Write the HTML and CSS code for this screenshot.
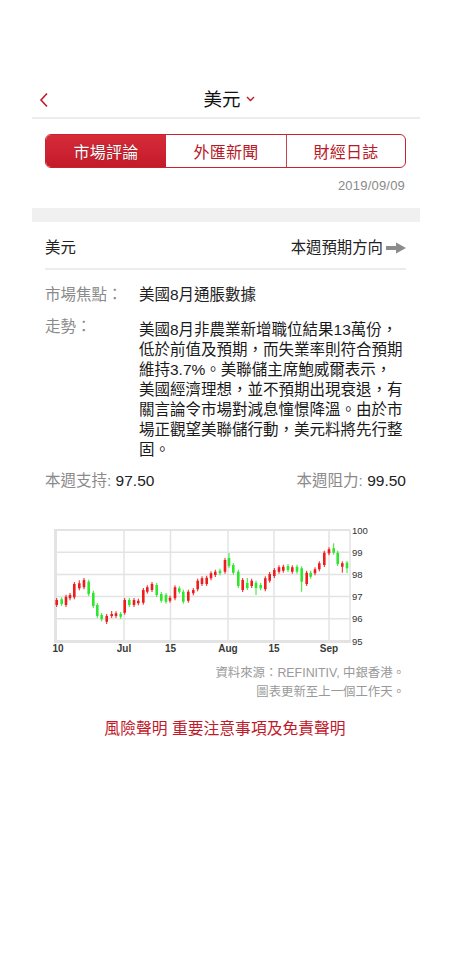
FILE: index.html
```html
<!DOCTYPE html>
<html lang="zh-Hant">
<head>
<meta charset="utf-8">
<title>美元</title>
<link rel="stylesheet" href="styles.css">
</head>
<body>
<div class="page">
  <header class="header">
    <span class="back">
      <svg width="10" height="16" viewBox="0 0 10 16"><polyline points="8,1.5 2,8 8,14.5" fill="none" stroke="#c0192a" stroke-width="1.6"/></svg>
    </span>
    <div class="title">美元<svg class="caret" width="9" height="6" viewBox="0 0 9 6"><polyline points="1,1 4.5,4.5 8,1" fill="none" stroke="#c0192a" stroke-width="1.4"/></svg></div>
    <span></span>
  </header>

  <nav class="tabs">
    <div class="tab active">市場評論</div>
    <div class="tab">外匯新聞</div>
    <div class="tab">財經日誌</div>
  </nav>

  <div class="date-wrap"><span class="date">2019/09/09</span></div>

  <div class="grey-bar"></div>

  <section class="content">
    <div class="currency-row">
      <span class="currency">美元</span>
      <span class="direction">本週預期方向<svg class="arrow" width="20" height="12" viewBox="0 0 20 12"><rect x="0" y="4" width="12" height="4" fill="#8c8c8c"/><polygon points="10,0.5 20,6 10,11.5" fill="#8c8c8c"/></svg></span>
    </div>

    <div class="info-row focus">
      <span class="label">市場焦點：</span>
      <span class="value">美國8月通脹數據</span>
    </div>

    <div class="info-row trend">
      <span class="label">走勢：</span>
      <p class="value para">美國8月非農業新增職位結果13萬份，低於前值及預期，而失業率則符合預期維持3.7%。美聯儲主席鮑威爾表示，美國經濟理想，並不預期出現衰退，有關言論令市場對減息憧憬降溫。由於市場正觀望美聯儲行動，美元料將先行整固。</p>
    </div>

    <div class="levels">
      <span><span class="label">本週支持:</span> 97.50</span>
      <span><span class="label">本週阻力:</span> 99.50</span>
    </div>
  </section>

  <svg class="chart" width="388" height="140" viewBox="32 520 388 140">
    <g stroke="#e3e3e3" fill="none">
      <path d="M55 530H350" stroke-width="2"/>
      <path d="M55 552.2H350M55 574.4H350M55 596.6H350M55 618.8H350" stroke-width="1.5"/>
      <path d="M124 530V641M170.5 530V641M228 530V641M274 530V641M329 530V641M350 530V641" stroke-width="1.5"/>
      <path d="M55.5 529V642.5M54 641.5H351" stroke-width="3"/>
    </g>
    <g stroke="#ee1c1c" stroke-width="1" fill="none">
      <path d="M56.7 598V607M66 594.7V607M70 593V600.3M74.3 582V599.3M79.3 580.3V590.3M84 578V589.3M106.7 614V624M111.7 611V618M116 611.3V618M124.7 598V614.7M134 598V607M138.3 598.7V605.3M143.3 588V604.7M147.3 585.3V593.7M152 582V592M170 595.7V602.7M175 585.3V600.3M188.3 589.7V602.7M193.3 588V595.3M197.7 578.7V591.3M202 576.3V586M206.7 575.7V586M211 571.3V580.3M215.3 569.7V577M225 558V573.7M242.7 578V592M251.7 578.7V588M265.3 576.3V591.3M269.7 572V582.7M274.3 568V578M279 565.3V573.7M283.3 564.7V572.7M292.3 565.3V573.7M306.7 570.7V586M315 567.3V575.3M319.3 561.3V571.3M324.3 550.7V567M329 547.3V555.3M342.3 561.3V572.7"/>
    </g>
    <path fill="#ee1c1c" d="M55.4 600h2.6V605h-2.6zM64.7 596.7h2.6V605h-2.6zM68.7 595h2.6V598.3h-2.6zM73 584h2.6V597.3h-2.6zM78 583.3h2.6V588.3h-2.6zM82.7 580h2.6V587.3h-2.6zM105.4 616h2.6V621.7h-2.6zM110.4 614h2.6V616h-2.6zM114.7 613.3h2.6V616h-2.6zM123.4 600h2.6V612.7h-2.6zM132.7 600h2.6V605h-2.6zM137 600.7h2.6V603.3h-2.6zM142 590h2.6V602.7h-2.6zM146 587.3h2.6V591.7h-2.6zM150.7 584h2.6V590h-2.6zM168.7 597.7h2.6V600.7h-2.6zM173.7 587.3h2.6V598.3h-2.6zM187 591.7h2.6V600.7h-2.6zM192 590h2.6V593.3h-2.6zM196.4 580.7h2.6V589.3h-2.6zM200.7 578.3h2.6V584h-2.6zM205.4 577.7h2.6V584h-2.6zM209.7 573.3h2.6V578.3h-2.6zM214 571.7h2.6V575h-2.6zM223.7 560h2.6V571.7h-2.6zM241.4 580h2.6V590h-2.6zM250.4 580.7h2.6V586h-2.6zM264 578.3h2.6V589.3h-2.6zM268.4 574h2.6V580.7h-2.6zM273 570h2.6V576h-2.6zM277.7 567.3h2.6V571.7h-2.6zM282 566.7h2.6V570.7h-2.6zM291 567.3h2.6V571.7h-2.6zM305.4 572.7h2.6V584h-2.6zM313.7 569.3h2.6V573.3h-2.6zM318 563.3h2.6V569.3h-2.6zM323 552.7h2.6V565h-2.6zM327.7 549.3h2.6V553.3h-2.6zM341 563.3h2.6V566.7h-2.6z"/>
    <g stroke="#2fe62f" stroke-width="1" fill="none">
      <path d="M61.7 597.3V606M88.7 579.7V596M93.3 590.7V608M97.3 603V618M101.7 613V621.3M120.7 612V618.7M129.3 598V607M156.7 583V597M161.3 592V602.7M166 593V603.7M179.3 586.3V593.7M183.3 589.7V603.7M220 568.7V575.3M229 553V568M233.3 563V574.7M238.3 569.7V588M247.3 578V590M256 580.7V595M260.7 583V590.3M288 564V572M297 564.7V573.7M301.7 566.3V591.7M310.7 570.7V578.7M333.7 543.3V554.7M337.7 550.7V566M347 561V573"/>
    </g>
    <path fill="#2fe62f" d="M60.4 599.3h2.6V604h-2.6zM87.4 581.7h2.6V594h-2.6zM92 592.7h2.6V606h-2.6zM96 605h2.6V616h-2.6zM100.4 615h2.6V619.3h-2.6zM119.4 614h2.6V616.7h-2.6zM128 600h2.6V605h-2.6zM155.4 585h2.6V595h-2.6zM160 594h2.6V600.7h-2.6zM164.7 595h2.6V601.7h-2.6zM178 588.3h2.6V591.7h-2.6zM182 591.7h2.6V601.7h-2.6zM218.7 570.7h2.6V573.3h-2.6zM227.7 558h2.6V566h-2.6zM232 565h2.6V572.7h-2.6zM237 571.7h2.6V586h-2.6zM246 583h2.6V588h-2.6zM254.7 582.7h2.6V588h-2.6zM259.4 585h2.6V588.3h-2.6zM286.7 566h2.6V570h-2.6zM295.7 566.7h2.6V571.7h-2.6zM300.4 568.3h2.6V581.7h-2.6zM309.4 572.7h2.6V576.7h-2.6zM332.4 548.3h2.6V552.7h-2.6zM336.4 552.7h2.6V564h-2.6zM345.7 562.7h2.6V568.3h-2.6z"/>
    <g class="ylab">
      <text x="352" y="533.5">100</text>
      <text x="352" y="555.7">99</text>
      <text x="352" y="577.9">98</text>
      <text x="352" y="600.1">97</text>
      <text x="352" y="622.3">96</text>
      <text x="352" y="644.5">95</text>
    </g>
    <g class="xlab">
      <text x="52.5" y="652">10</text>
      <text x="124" y="652" text-anchor="middle">Jul</text>
      <text x="170.5" y="652" text-anchor="middle">15</text>
      <text x="228" y="652" text-anchor="middle">Aug</text>
      <text x="274" y="652" text-anchor="middle">15</text>
      <text x="329" y="652" text-anchor="middle">Sep</text>
    </g>
  </svg>

  <div class="source">
    <div>資料來源：REFINITIV, 中銀香港。</div>
    <div>圖表更新至上一個工作天。</div>
  </div>

  <div class="disclaimer">風險聲明 重要注意事項及免責聲明</div>
</div>
</body>
</html>
```

FILE: styles.css
```css
* { box-sizing: border-box; }
html, body {
  margin: 0;
  padding: 0;
  background: #ffffff;
}
body {
  font-family: "Liberation Sans", "Noto Sans CJK TC", sans-serif;
  color: #222222;
  width: 450px;
}
.page {
  padding-top: 82px;
  padding-bottom: 40px;
}
.header {
  margin: 0 30px 0 32px;
  height: 37px;
  border-bottom: 2px solid #ececec;
  display: grid;
  grid-template-columns: 40px 1fr 40px;
  align-items: center;
}
.back {
  display: flex;
  align-items: center;
  padding-left: 7px;
  padding-top: 1px;
}
.title {
  display: flex;
  align-items: center;
  justify-content: center;
  font-size: 18.5px;
  line-height: 24px;
  color: #111111;
  padding-left: 6px;
}
.caret {
  margin-left: 5px;
  margin-top: -2px;
}
.tabs {
  margin: 15px 44px 0 45px;
  height: 34px;
  display: grid;
  grid-template-columns: 120px 120px 1fr;
  border: 1.5px solid #c8232f;
  border-radius: 6px;
  overflow: hidden;
}
.tab {
  display: flex;
  align-items: center;
  justify-content: center;
  font-size: 16px;
  color: #b81a28;
  letter-spacing: 0.3px;
}
.tab + .tab + .tab {
  border-left: 1px solid #c84550;
}
.tab.active {
  background: linear-gradient(180deg, #d62b39 0%, #c41b2b 100%);
  color: #ffffff;
  text-shadow: 0 0 1px #7a0a14;
}
.date-wrap {
  margin: 11px 45px 0 0;
  display: flex;
  justify-content: flex-end;
}
.date {
  font-size: 13px;
  line-height: 14px;
  color: #8a8a8a;
  letter-spacing: 0.2px;
}
.grey-bar {
  margin: 15px 30px 0 32px;
  height: 14px;
  background: #f0f0f0;
}
.content {
  padding: 0 44px 0 45px;
}
.currency-row {
  display: flex;
  justify-content: space-between;
  align-items: center;
  padding: 16px 0 10px;
  border-bottom: 2px solid #ececec;
  font-size: 15.4px;
  line-height: 20px;
}
.direction {
  display: flex;
  align-items: center;
}
.arrow {
  margin-left: 3px;
}
.info-row {
  display: grid;
  grid-template-columns: 94px 1fr;
  font-size: 15.5px;
  line-height: 20px;
}
.focus {
  margin-top: 15px;
}
.trend {
  margin-top: 15px;
}
.label {
  color: #8a8a8a;
}
.trend .label {
  margin-top: -3px;
}
.para {
  margin: 0;
  line-height: 20px;
  color: #1a1a1a;
}
.levels {
  margin-top: 11px;
  display: flex;
  justify-content: space-between;
  font-size: 15.5px;
  line-height: 20px;
}
.chart {
  display: block;
  margin: 29px 0 0 32px;
}
.ylab text {
  font-family: "Liberation Sans", sans-serif;
  font-size: 9.5px;
  fill: #333333;
}
.xlab text {
  font-family: "Liberation Sans", sans-serif;
  font-size: 10px;
  font-weight: bold;
  fill: #3a3a3a;
}
.source {
  margin-top: 4px;
  padding-right: 45px;
  text-align: right;
  font-size: 12.4px;
  line-height: 19px;
  color: #999999;
}
.disclaimer {
  margin-top: 17px;
  text-align: center;
  font-size: 15.8px;
  line-height: 20px;
  color: #c0192a;
}
```
